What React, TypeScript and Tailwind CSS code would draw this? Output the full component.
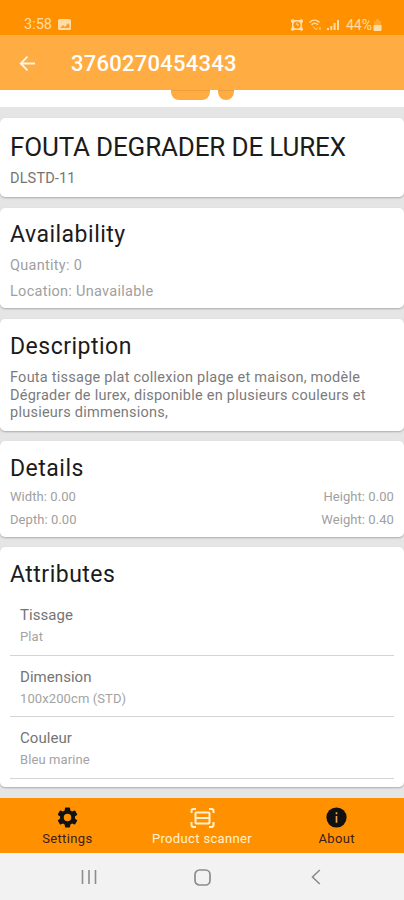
import type { ReactNode } from "react";

function Heading({ children }: { children: ReactNode }) {
  return <h2 className="text-[23px] leading-[30px] tracking-[0.5px] text-[#1b1b1b]">{children}</h2>;
}

function Card({ className, children }: { className: string; children: ReactNode }) {
  return (
    <section className={`shrink-0 rounded-[5px] bg-white px-[10px] shadow-[0_1px_2px_rgba(0,0,0,0.25)] ${className}`}>
      {children}
    </section>
  );
}

function Attribute({ name, value }: { name: string; value: string }) {
  return (
    <li className="h-[61.5px] border-b border-[#d4d4d4] px-[10px] pt-[11px]">
      <p className="text-[15px] leading-[20px] tracking-[0.05px] text-[#747474]">{name}</p>
      <p className="mt-[3px] text-[13px] leading-[18px] tracking-[0.1px] text-[#a3a3a3]">{value}</p>
    </li>
  );
}

function StatusBar() {
  return (
    <div className="flex h-[35px] shrink-0 items-center bg-[#ff9100] pt-[14px] pr-[22px] pl-[24px] text-[#ffdca6]">
      <span className="text-[14.5px] leading-5">3:58</span>
      <svg className="ml-[6px]" width="13" height="12" viewBox="0 0 13 12">
        <rect width="13" height="11" rx="1.5" fill="currentColor" />
        <path d="M2 9l3-3 2 2 3-4 1.500 2v3z" fill="#ff9f24" />
      </svg>
      <svg className="ml-auto" width="12" height="12" viewBox="0 0 12 12">
        <path d="M0 1l2-1 1 1h6l1-1 2 1v2l-1 1v4l1 2v1l-2 1-1-1H3l-1 1-2-1v-1l1-2V4L0 3z" fill="currentColor" />
        <circle cx="6" cy="6" r="3.6" fill="#ff9100" />
        <path d="M6 3.5V6h2" fill="none" stroke="currentColor" />
      </svg>
      <svg className="ml-[6px]" width="13" height="12" viewBox="0 0 13 12" fill="none" stroke="currentColor">
        <path d="M.5 3.500c3-3 7-3 10 0M2.500 5.800c2-2 4.500-2 6.500 0" strokeWidth="1.400" />
        <path d="M4 7.500l3 3 2-2M11 8v3" />
      </svg>
      <svg className="ml-[5px]" width="12" height="12" viewBox="0 0 12 12" fill="currentColor">
        <path d="M0 9h2v2H0zM3.300 7h2v4h-2zM6.600 4h2v7h-2zM10 1h2v10h-2z" />
      </svg>
      <span className="ml-[7px] text-[14px] leading-5">44%</span>
      <svg className="ml-[1px]" width="9" height="12" viewBox="0 0 9 12" fill="currentColor">
        <path d="M3 0h3v2h2v4H1V2h2z" opacity=".3" />
        <path d="M.5 6h8v5q0 1-1 1h-6q-1 0-1-1z" />
      </svg>
    </div>
  );
}

export default function App() {
  return (
    <div className="flex h-[900px] w-[404px] flex-col overflow-hidden bg-[#e5e5e5] font-['Roboto',sans-serif]">
      <StatusBar />
      <header className="flex h-[55px] shrink-0 items-center bg-[#ffad42] pt-[2px] pl-[19px] text-white">
        <svg width="17" height="16" viewBox="0 0 17 16" fill="none" stroke="#fff6df" strokeWidth="1.800">
          <path d="M16 7.500H2M8.500 .7L1.700 7.500l6.800 6.800" />
        </svg>
        <h1 className="ml-[35px] text-[22px] leading-7 font-medium tracking-[0.25px]">3760270454343</h1>
      </header>
      <div className="flex h-[17px] shrink-0 justify-center gap-[8px] bg-white">
        <div className="h-[10px] w-[39px] rounded-b-[8px] border-t border-[#ee9f3c] bg-[#ffad42]" />
        <div className="h-[10px] w-[16px] rounded-b-[8px] border-t border-[#ee9f3c] bg-[#ffad42]" />
      </div>

      <main className="flex min-h-0 flex-1 flex-col pt-[11px]">
        <Card className="h-[79px] pt-[14px]">
          <h2 className="text-[26px] leading-[30px] tracking-[-0.16px] whitespace-nowrap text-[#1b1b1b]">
            FOUTA DEGRADER DE LUREX
          </h2>
          <p className="mt-[7px] text-[14.500px] leading-[20px] tracking-[0.15px] text-[#747474]">DLSTD-11</p>
        </Card>
        <Card className="mt-[11px] h-[100px] pt-[12px]">
          <Heading>Availability</Heading>
          <div className="mt-[3px] text-[14.500px] leading-[25.500px] tracking-[0.28px] text-[#a0a0a0]">
            <p>Quantity: 0</p>
            <p>Location: Unavailable</p>
          </div>
        </Card>
        <Card className="mt-[11px] h-[112px] pt-[13px]">
          <Heading>Description</Heading>
          <p className="mt-[7px] text-[14.500px] leading-[17.500px] tracking-[0.245px] text-[#7b7b7b]">
            Fouta tissage plat collexion plage et maison, modèle
            <br />
            Dégrader de lurex, disponible en plusieurs couleurs et
            <br />
            plusieurs dimmensions,
          </p>
        </Card>
        <Card className="mt-[10px] h-[96px] pt-[13px]">
          <Heading>Details</Heading>
          <div className="mt-[2px] text-[13px] leading-[22.500px] tracking-[0.07px] text-[#a0a0a0]">
            <p className="flex justify-between"><span>Width: 0.00</span><span>Height: 0.00</span></p>
            <p className="flex justify-between"><span>Depth: 0.00</span><span>Weight: 0.40</span></p>
          </div>
        </Card>
        <Card className="mt-[10px] h-[240px] pt-[13px]">
          <Heading>Attributes</Heading>
          <ul className="mt-[4px]">
            <Attribute name="Tissage" value="Plat" />
            <Attribute name="Dimension" value="100x200cm (STD)" />
            <Attribute name="Couleur" value="Bleu marine" />
          </ul>
        </Card>
      </main>

      <nav className="grid h-[55px] shrink-0 grid-cols-3 bg-[#ff9100] pt-[7px] text-[13px] leading-[16px] text-[#3b1d1d]">
        <div className="flex flex-col items-center">
          <svg width="25" height="25" viewBox="0 0 24 24" fill="#111">
            <path d="M19.140 12.940c.04-.3.060-.61.060-.94s-.02-.64-.07-.94l2.030-1.580a.49.49 0 0 0 .12-.61l-1.920-3.320a.49.49 0 0 0-.59-.22l-2.390.96a7 7 0 0 0-1.620-.94l-.36-2.540A.48.48 0 0 0 13.920 2.400h-3.840a.48.48 0 0 0-.47.410l-.36 2.540c-.59.240-1.130.57-1.620.94l-2.390-.96a.48.48 0 0 0-.59.220L2.740 8.870a.48.48 0 0 0 .12.610l2.030 1.580a6 6 0 0 0 0 1.880l-2.030 1.580a.49.49 0 0 0-.12.610l1.920 3.320c.12.220.37.290.59.220l2.390-.96c.5.380 1.030.7 1.620.94l.36 2.540c.05.240.24.410.47.410h3.840c.24 0 .44-.17.470-.41l.36-2.540c.59-.24 1.130-.56 1.620-.94l2.390.96c.22.080.47 0 .59-.22l1.920-3.320a.48.48 0 0 0-.12-.61zM12 15.600a3.600 3.600 0 1 1 0-7.200 3.600 3.600 0 0 1 0 7.200" />
          </svg>
          <span className="mt-[1px] tracking-[0.350px]">Settings</span>
        </div>
        <div className="flex flex-col items-center text-[#fff1cf]">
          <svg className="ml-[2px]" width="25" height="25" viewBox="0 0 25 25" fill="none" stroke="currentColor" strokeWidth="2">
            <path d="M1.500 8V6q0-2 2-2H6M19 4h2.500q2 0 2 2v2M23.500 17v3q0 2-2 2H19M6 22H3.500q-2 0-2-2v-3" />
            <rect x="5.500" y="7.500" width="14" height="11" rx="1" />
            <path d="M5.500 13h14" />
          </svg>
          <span className="mt-[1px] tracking-[0.350px] whitespace-nowrap">Product scanner</span>
        </div>
        <div className="flex flex-col items-center">
          <svg width="25" height="25" viewBox="0 0 24 24">
            <circle cx="12" cy="12" r="9.700" fill="#111" />
            <path d="M11.200 10.500h1.600V17h-1.600zM11.200 7h1.600v1.800h-1.600z" fill="#e8a85c" />
          </svg>
          <span className="mt-[1px] tracking-[0.350px]">About</span>
        </div>
      </nav>

      <div className="flex h-[47px] shrink-0 items-center bg-[#f2f2f2] pt-[1px] pl-[81px] text-[#8c8c8c]">
        <svg width="16" height="16" viewBox="0 0 16 16" fill="none" stroke="currentColor" strokeWidth="1.600">
          <path d="M1.500 1v14M8 1v14M14.500 1v14" />
        </svg>
        <svg className="ml-[97px]" width="17" height="17" viewBox="0 0 17 17" fill="none" stroke="currentColor" strokeWidth="1.700">
          <rect x="1" y="1" width="15" height="15" rx="4.500" />
        </svg>
        <svg className="ml-[100px]" width="10" height="16" viewBox="0 0 10 16" fill="none" stroke="currentColor" strokeWidth="1.600">
          <path d="M8.800 1L1.500 8l7.300 7" />
        </svg>
      </div>
    </div>
  );
}
